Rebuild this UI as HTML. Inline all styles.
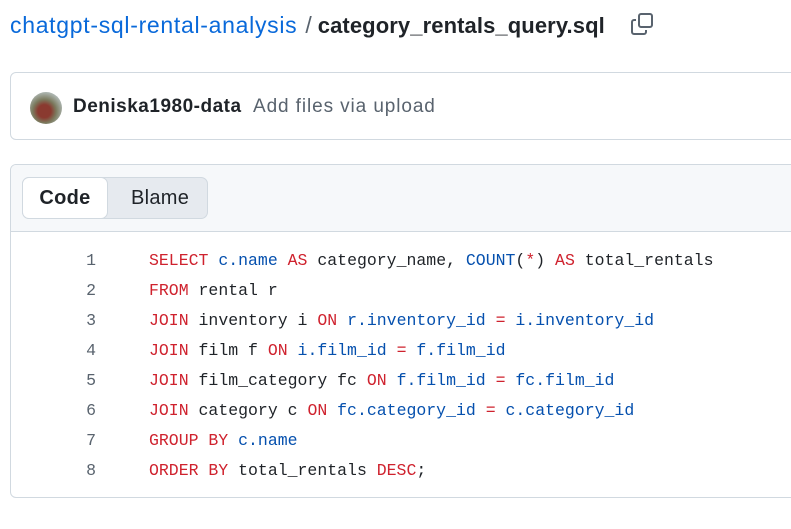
<!DOCTYPE html>
<html><head><meta charset="utf-8"><style>
*{margin:0;padding:0;box-sizing:border-box}
body{width:791px;height:529px;background:#fff;position:relative;overflow:hidden;font-family:"Liberation Sans",sans-serif;color:#1f2328}
.title{position:absolute;left:10px;top:10px;font-size:23px;line-height:30px;white-space:nowrap}
.title a{color:#0969da;text-decoration:none;letter-spacing:0.7px}
.title .sep{color:#59636e;margin:0 6px 0 8px}
.title b{font-weight:bold;color:#1f2328;font-size:22px;letter-spacing:0.1px}
.copy{position:absolute;left:630px;top:12px}
.commit{position:absolute;left:10px;top:72px;width:800px;height:68px;border:1px solid #d1d9e0;border-radius:6px}
.av{position:absolute;left:19px;top:19px;width:32px;height:32px;border-radius:50%;background:radial-gradient(circle at 45% 60%,#8a3a30 0 25%,#7b7a5e 45%,#a9b1aa 70%,#c8d3dc 100%)}
.user{position:absolute;left:62px;top:20px;font-size:19px;font-weight:bold;line-height:28px;letter-spacing:0.5px}
.msg{position:absolute;left:242px;top:20px;font-size:19px;color:#59636e;line-height:28px;letter-spacing:0.9px}
.code{position:absolute;left:10px;top:164px;width:800px;height:334px;border:1px solid #d1d9e0;border-radius:6px;overflow:hidden}
.hdr{height:67px;background:#f6f8fa;border-bottom:1px solid #d1d9e0;position:relative}
.seg{position:absolute;left:11px;top:12px;width:186px;height:42px;background:#e6eaef;border:1px solid #d1d9e0;border-radius:7px}
.seg .on{position:absolute;left:-1px;top:-1px;width:86px;height:42px;background:#fff;border:1px solid #d1d9e0;border-radius:7px;font-size:20px;line-height:40px;text-align:center;font-weight:600;letter-spacing:0.3px}
.seg .off{position:absolute;left:108px;top:0;font-size:20px;line-height:40px;color:#1f2328;letter-spacing:0.3px}
.lines{position:absolute;left:0;top:81px;font-family:"Liberation Mono",monospace;font-size:16.5px;line-height:30px;white-space:pre}
.ln{position:absolute;left:55px;width:30px;text-align:right;color:#59636e}
.tx{position:absolute;left:138px}
.k{color:#cf222e}.b{color:#0550ae}
</style></head><body>
<div class="title"><a>chatgpt-sql-rental-analysis</a><span class="sep">/</span><b>category_rentals_query.sql</b></div>
<svg class="copy" width="24" height="24" viewBox="0 0 24 24" fill="none" stroke="#59636e" stroke-width="2"><rect x="9" y="2" width="13" height="13" rx="2"/><path d="M6 8H4a2 2 0 0 0-2 2v10a2 2 0 0 0 2 2h10a2 2 0 0 0 2-2v-2"/></svg>
<div class="commit"><div class="av"></div><div class="user">Deniska1980-data</div><div class="msg">Add files via upload</div></div>
<div class="code"><div class="hdr"><div class="seg"><div class="on">Code</div><div class="off">Blame</div></div></div>
<div class="lines">
<div class="ln" style="top:0">1</div><div class="tx" style="top:0"><span class="k">SELECT</span> <span class="b">c.name</span> <span class="k">AS</span> category_name, <span class="b">COUNT</span>(<span class="k">*</span>) <span class="k">AS</span> total_rentals</div>
<div class="ln" style="top:30px">2</div><div class="tx" style="top:30px"><span class="k">FROM</span> rental r</div>
<div class="ln" style="top:60px">3</div><div class="tx" style="top:60px"><span class="k">JOIN</span> inventory i <span class="k">ON</span> <span class="b">r.inventory_id</span> <span class="k">=</span> <span class="b">i.inventory_id</span></div>
<div class="ln" style="top:90px">4</div><div class="tx" style="top:90px"><span class="k">JOIN</span> film f <span class="k">ON</span> <span class="b">i.film_id</span> <span class="k">=</span> <span class="b">f.film_id</span></div>
<div class="ln" style="top:120px">5</div><div class="tx" style="top:120px"><span class="k">JOIN</span> film_category fc <span class="k">ON</span> <span class="b">f.film_id</span> <span class="k">=</span> <span class="b">fc.film_id</span></div>
<div class="ln" style="top:150px">6</div><div class="tx" style="top:150px"><span class="k">JOIN</span> category c <span class="k">ON</span> <span class="b">fc.category_id</span> <span class="k">=</span> <span class="b">c.category_id</span></div>
<div class="ln" style="top:180px">7</div><div class="tx" style="top:180px"><span class="k">GROUP BY</span> <span class="b">c.name</span></div>
<div class="ln" style="top:210px">8</div><div class="tx" style="top:210px"><span class="k">ORDER BY</span> total_rentals <span class="k">DESC</span>;</div>
</div></div>
</body></html>
